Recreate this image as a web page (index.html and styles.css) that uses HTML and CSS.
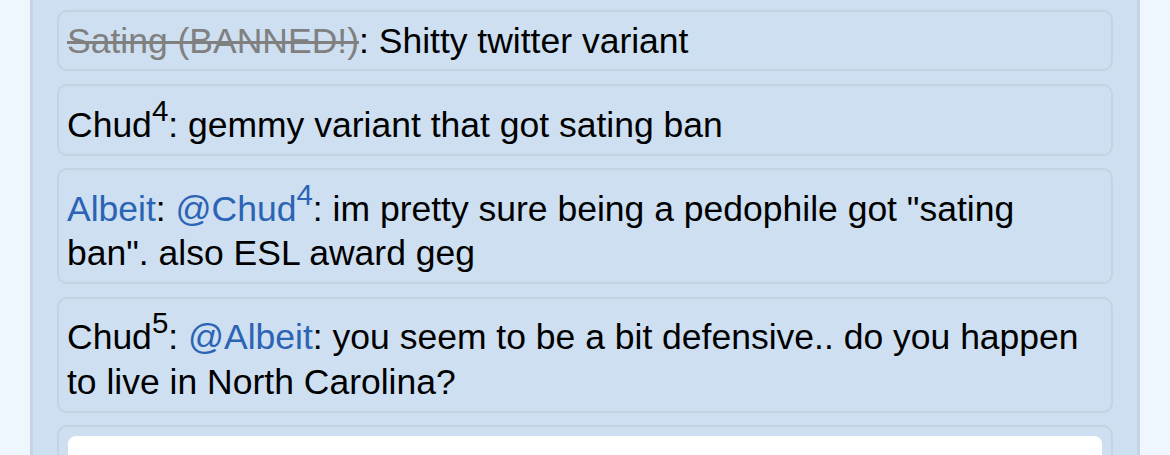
FILE: index.html
```html
<!DOCTYPE html>
<html lang="en">
<head>
  <meta charset="UTF-8">
  <meta name="viewport" content="width=device-width, initial-scale=1.0">
  <title>Chat</title>
  <link rel="stylesheet" href="styles.css">
</head>
<body>

  <div class="chat">
    <div class="message">
      <span class="nick banned">Sating (BANNED!)</span>: Shitty twitter variant
    </div>
    <div class="message">
      <span class="nick">Chud<sup>4</sup></span>: gemmy variant that got sating ban
    </div>
    <div class="message">
      <a class="nick link" href="#">Albeit</a>: <a class="link" href="#">@Chud<sup>4</sup></a>: im pretty sure being a pedophile got "sating ban". also ESL award geg
    </div>
    <div class="message">
      <span class="nick">Chud<sup>5</sup></span>: <a class="link" href="#">@Albeit</a>: you seem to be a bit defensive.. do you happen to live in North Carolina?
    </div>
    <!-- reply box -->
    <div class="message reply">
      <div class="reply-input"></div>
    </div>
  </div>

</body>
</html>
```

FILE: styles.css
```css
body {
  font-family: "Liberation Sans", Arial, Helvetica, sans-serif;
  background-color: #eef6fe;
  margin: 0;
  padding: 0;
  overflow: hidden;
}

.chat {
  margin: 0 30px;
  padding: 10px 24px 0;
  min-height: 455px;
  box-sizing: border-box;
  background-color: #cddff0;
  border-left: 3px solid #c4d4e5;
  border-right: 3px solid #c4d4e5;
}

.message {
  border: 2px solid #c5d2e1;
  border-radius: 10px;
  padding: 6.5px 8px;
  margin-bottom: 12.8px;
  font-size: 35.5px;
  line-height: 1.25;
  color: #000;
}

.message sup {
  font-size: 0.83em;
  vertical-align: 16px;
}

.nick.banned {
  color: #808080;
  text-decoration: line-through;
}

.link {
  color: #2b63b5;
  text-decoration: none;
}

.reply {
  padding: 9px;
}

.reply-input {
  background-color: #fff;
  border-radius: 8px;
  height: 60px;
}
```
